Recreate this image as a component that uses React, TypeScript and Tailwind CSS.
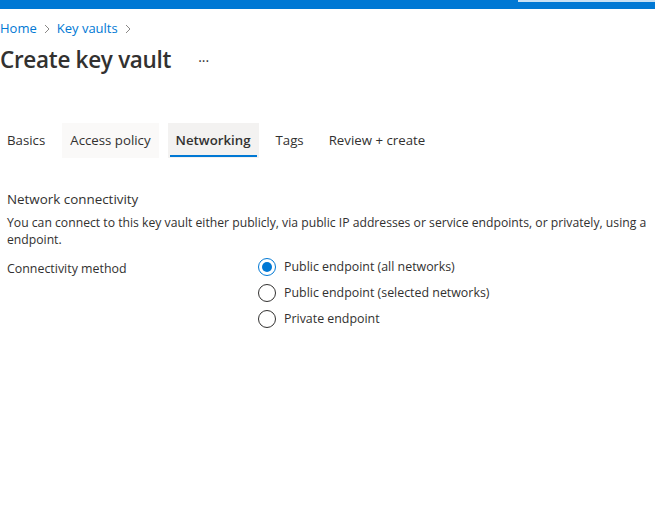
import React from "react";

const font = { fontFamily: '"Open Sans", "Noto Sans", sans-serif' };

function Chevron() {
  return (
    <svg width="12" height="12" viewBox="0 0 12 12" className="mx-[4px]">
      <path d="M4 2 L8 6 L4 10" fill="none" stroke="#8a8886" strokeWidth="1" />
    </svg>
  );
}

function Radio({ checked, label }: { checked?: boolean; label: string }) {
  return (
    <div className="flex items-center h-[26px]">
      <span
        className={`w-[18px] h-[18px] rounded-full border flex items-center justify-center ${
          checked ? "border-[#0078d4]" : "border-[#323130]"
        }`}
      >
        {checked && <span className="w-[10px] h-[10px] rounded-full bg-[#0078d4]" />}
      </span>
      <span className="ml-[8px] text-[12.4px] text-[#323130]">{label}</span>
    </div>
  );
}

export default function App() {
  const tabs = ["Basics", "Access policy", "Networking", "Tags", "Review + create"];
  return (
    <div className="w-[655px] h-[528px] bg-white overflow-hidden text-[#323130]" style={font}>
      <div className="h-[9px] bg-[#0078d4] flex justify-end">
        <div className="w-[137px] h-[2px] bg-[#c7e0f4]" />
      </div>

      <div className="flex items-center h-[20px] mt-[10px] text-[13px] text-[#0078d4]">
        <span>Home</span>
        <Chevron />
        <span>Key vaults</span>
        <Chevron />
      </div>

      <div className="flex items-center mt-[3px] h-[36px]">
        <h1 className="text-[22.5px] font-semibold text-[#323130] tracking-[-0.3px]">Create key vault</h1>
        <span className="ml-[27px] text-[14px] text-[#323130]">···</span>
      </div>

      <div className="flex items-stretch h-[35px] mt-[45px] text-[13.25px]">
        {tabs.map((t) => {
          const active = t === "Networking";
          const hover = t === "Access policy";
          return (
            <div
              key={t}
              className={`relative flex items-center px-[8px] first:pl-[7px] mr-[9px] ${
                active ? "bg-[#f3f2f1] font-semibold" : hover ? "bg-[#faf9f8]" : ""
              }`}
            >
              {t}
              {active && (
                <span className="absolute left-[2px] right-[2px] bottom-[1px] h-[2px] bg-[#0078d4]" />
              )}
            </div>
          );
        })}
      </div>

      <div className="px-[7px] mt-[31px]">
        <div className="text-[13.4px] leading-[20px]">Network connectivity</div>
        <p className="mt-[5px] text-[12.2px] leading-[17px] whitespace-nowrap">
          You can connect to this key vault either publicly, via public IP addresses or service endpoints, or privately, using a
          <br />
          endpoint.
        </p>
        <div className="flex mt-[6px]">
          <div className="w-[251px] text-[12.4px] pt-[6px]">Connectivity method</div>
          <div className="flex flex-col">
            <Radio checked label="Public endpoint (all networks)" />
            <Radio label="Public endpoint (selected networks)" />
            <Radio label="Private endpoint" />
          </div>
        </div>
      </div>
    </div>
  );
}
